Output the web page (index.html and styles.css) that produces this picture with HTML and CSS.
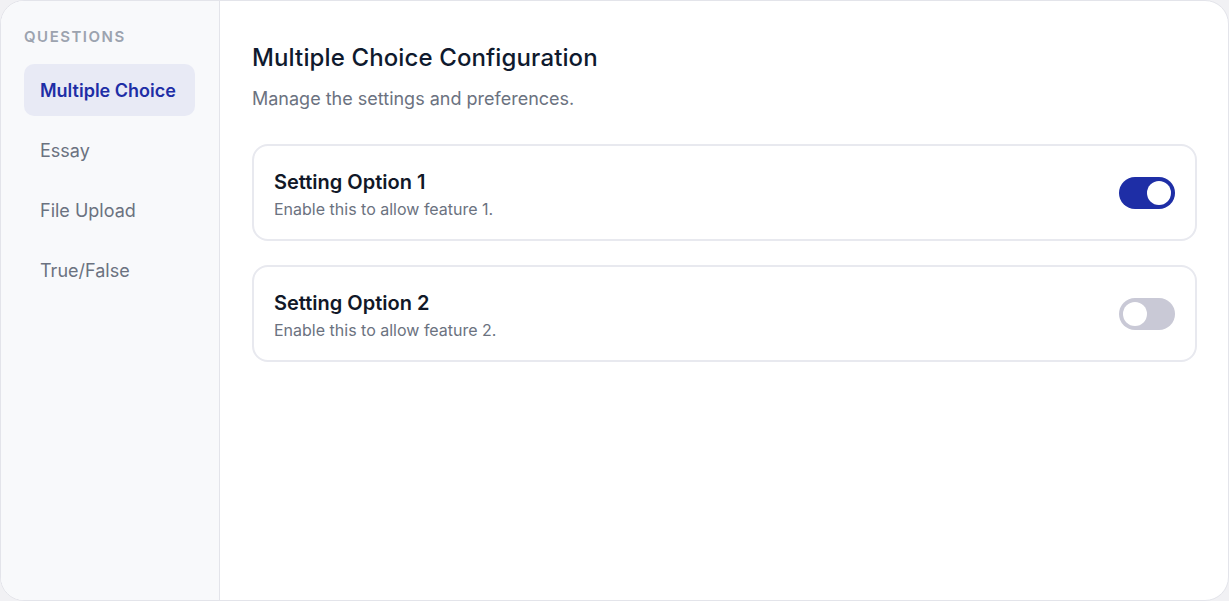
FILE: index.html
```html
<!DOCTYPE html>
<html lang="en">
<head>
<meta charset="utf-8">
<title>Multiple Choice Configuration</title>
<link rel="stylesheet" href="styles.css">
</head>
<body>
<div class="app">
  <aside class="sidebar">
    <div class="sidebar-label">Questions</div>
    <nav class="nav">
      <a class="nav-item active">Multiple Choice</a>
      <a class="nav-item">Essay</a>
      <a class="nav-item">File Upload</a>
      <a class="nav-item">True/False</a>
    </nav>
  </aside>
  <main class="main">
    <h1 class="title">Multiple Choice Configuration</h1>
    <p class="subtitle">Manage the settings and preferences.</p>
    <div class="cards">
      <div class="card">
        <div class="card-text">
          <div class="card-title">Setting Option 1</div>
          <div class="card-desc">Enable this to allow feature 1.</div>
        </div>
        <span class="toggle on"><span class="knob"></span></span>
      </div>
      <div class="card">
        <div class="card-text">
          <div class="card-title">Setting Option 2</div>
          <div class="card-desc">Enable this to allow feature 2.</div>
        </div>
        <span class="toggle"><span class="knob"></span></span>
      </div>
    </div>
  </main>
</div>
</body>
</html>
```
FILE: styles.css
```css
* { box-sizing: border-box; }
html, body { margin: 0; padding: 0; }
body {
  background: #f1f1f4;
  font-family: Inter, "Noto Sans", sans-serif;
  -webkit-font-smoothing: antialiased;
}
.app {
  display: flex;
  width: 1229px;
  height: 601px;
  background: #ffffff;
  border: 1px solid #e3e4ea;
  border-radius: 24px;
  overflow: hidden;
}
.sidebar {
  width: 219px;
  flex: none;
  background: #f8f9fb;
  border-right: 1px solid #e3e4ea;
  padding: 27px 24px 24px 23px;
}
.sidebar-label {
  font-size: 15px;
  font-weight: 600;
  letter-spacing: 0.1em;
  text-transform: uppercase;
  color: #9ca3af;
  line-height: 18px;
  margin-bottom: 18px;
}
.nav {
  display: flex;
  flex-direction: column;
  gap: 8px;
}
.nav-item {
  display: flex;
  align-items: center;
  height: 52px;
  padding: 0 16px;
  border-radius: 10px;
  font-size: 18px;
  color: #6b7280;
  cursor: pointer;
}
.nav-item.active {
  background: #e8eaf5;
  color: #1e2ea6;
  font-weight: 600;
}
.main {
  flex: 1;
  padding: 40px 31px 32px 32px;
}
.title {
  margin: 0;
  font-size: 24px;
  font-weight: 500;
  color: #0f1a2e;
  line-height: 34px;
  letter-spacing: 0.005em;
}
.subtitle {
  margin: 11px 0 0;
  font-size: 18px;
  line-height: 26px;
  color: #6b7280;
}
.cards {
  display: flex;
  flex-direction: column;
  gap: 24px;
  margin-top: 32px;
}
.card {
  display: flex;
  align-items: center;
  justify-content: space-between;
  height: 97px;
  padding: 0 20px;
  border: 2px solid #e8e9ef;
  border-radius: 16px;
}
.card-text {
  padding-top: 2px;
}
.card-title {
  font-size: 20px;
  font-weight: 600;
  color: #111827;
  line-height: 28px;
}
.card-desc {
  font-size: 16px;
  color: #6b7280;
  line-height: 22px;
  margin-top: 2px;
}
.toggle {
  width: 56px;
  height: 32px;
  border-radius: 16px;
  background: #c9c9d6;
  display: flex;
  align-items: center;
  padding: 4px;
  flex: none;
}
.toggle .knob {
  width: 24px;
  height: 24px;
  border-radius: 50%;
  background: #ffffff;
}
.toggle.on {
  background: #1e2ea6;
  justify-content: flex-end;
}
```
